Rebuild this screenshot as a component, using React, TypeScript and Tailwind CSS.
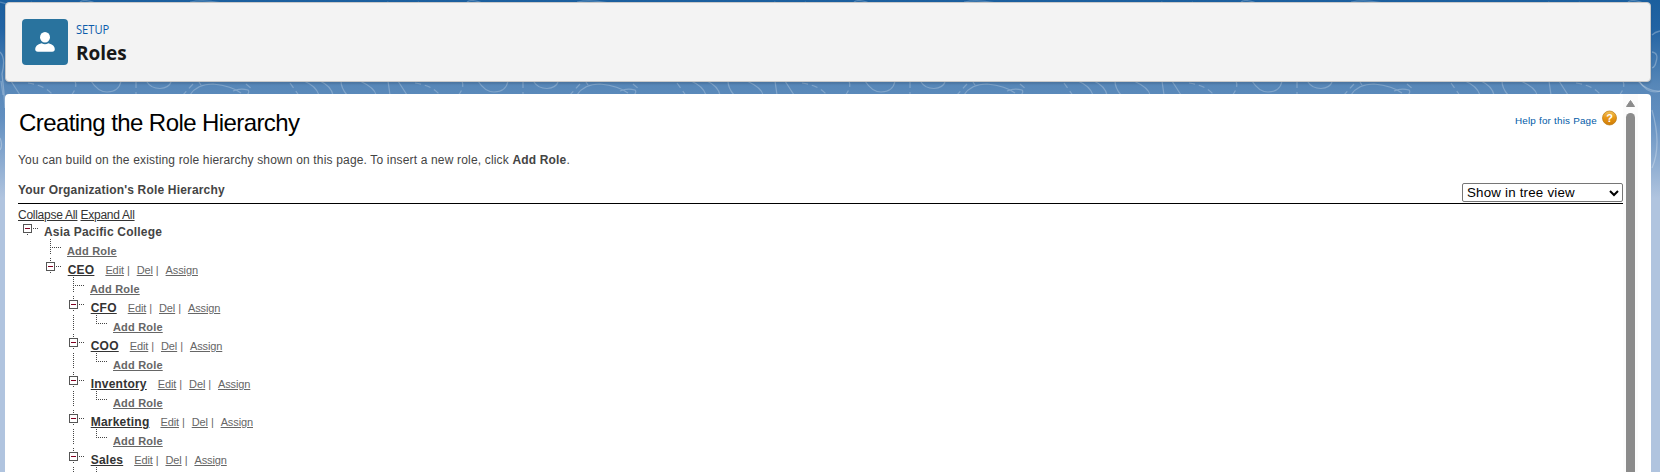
import React from "react";

type Row = { kind: "root" | "role" | "add"; level: number; label: string; last?: boolean };

const rows: Row[] = [
  { kind: "root", level: 0, label: "Asia Pacific College" },
  { kind: "add", level: 1, label: "Add Role" },
  { kind: "role", level: 1, label: "CEO" },
  { kind: "add", level: 2, label: "Add Role" },
  ...["CFO", "COO", "Inventory", "Marketing", "Sales"].flatMap((label): Row[] => [
    { kind: "role", level: 2, label },
    { kind: "add", level: 3, label: label === "Sales" ? "" : "Add Role", last: true },
  ]),
];

function Branch({ row }: { row: Row }) {
  const dots = { stroke: "#444", strokeDasharray: "1 1" };
  return (
    <svg width="22" height="19" className="shrink-0" shapeRendering="crispEdges" fill="none">
      {row.kind === "add" ? (
        <>
          <path d={row.last ? "M5.5 1V10" : "M5.5 1V17"} {...dots} />
          <path d="M5 9.5H17" {...dots} />
        </>
      ) : (
        <>
          {row.kind === "role" && <path d="M5.5 1V5" {...dots} />}
          <path d="M5.5 15V17" {...dots} />
          <path d="M11 9.5H16" {...dots} />
          <rect x="1.5" y="5.5" width="8" height="8" stroke="#555" fill="#fff" />
          <path d="M3 9.5H8" stroke="#800020" />
        </>
      )}
    </svg>
  );
}

function TreeRow({ row }: { row: Row }) {
  return (
    <div className="flex h-[19px] items-start whitespace-nowrap">
      {Array.from({ length: row.level }, (_, i) => (
        <svg key={i} width="23" height="19" className="shrink-0" shapeRendering="crispEdges">
          {i === 2 && <path d="M5.5 1V17" stroke="#444" strokeDasharray="1 1" />}
        </svg>
      ))}
      <Branch row={row} />
      {row.kind === "root" && (
        <span className="text-[12px] leading-[27px] font-bold tracking-[0.2px] text-[#444]">{row.label}</span>
      )}
      {row.kind === "add" && (
        <a className="text-[11px] leading-[27px] font-bold tracking-[0.18px] text-[#666] underline">{row.label}</a>
      )}
      {row.kind === "role" && (
        <div className="ml-[0.7px] flex text-[11px] leading-[27px] tracking-[-0.11px] text-[#666]">
          <a className="mr-[11px] text-[12px] font-bold tracking-[0.23px] text-[#333] underline">{row.label}</a>
          <a className="underline">Edit</a>
          <span className="mr-[7px] ml-[3px]">|</span>
          <a className="underline">Del</a>
          <span className="mr-[7px] ml-[3px]">|</span>
          <a className="underline">Assign</a>
        </div>
      )}
    </div>
  );
}

function Backdrop() {
  return (
    <svg className="absolute inset-0" width="1660" height="472">
      <defs>
        <linearGradient id="sky" x1="0" y1="0" x2="0" y2="1">
          <stop offset="0" stopColor="#1b5f9e" />
          <stop offset="0.06" stopColor="#2263a3" />
          <stop offset="0.18" stopColor="#5787b8" />
          <stop offset="0.25" stopColor="#628fc0" />
          <stop offset="0.42" stopColor="#b0c4df" />
          <stop offset="1" stopColor="#b0c4df" />
        </linearGradient>
        <pattern id="topo" width="387" height="472" patternUnits="userSpaceOnUse">
          <g fill="none" stroke="#fff" strokeOpacity="0.24" strokeWidth="1.2">
            <path d="M91 81Q98 92 107 92Q119 92 121 81M147 82Q151 88.500 160 88.500Q169 88 171 82" />
            <path d="M190 95Q197 84 213 84Q232 86 241 93M199 82L201 85M233 91Q240 88 248 90Q250 92 247 95" />
            <path d="M304 81Q316 86 319 95M320 81Q331 86 333 95M341 81Q341 88 347 95M360 81Q375 88 376 95" />
            <path d="M1 81L3 95M11 81L20 95M0 2Q20 8 32 2M80 2Q85 -2 100 5M190 2Q210 -2 240 8" />
            <path strokeDasharray="6 4" d="M28 83Q48 86 54 97M75 81Q78 88 70 97M136 82V96M290 83L300 97M193 84L182 96M246 84L253 90" />
          </g>
        </pattern>
      </defs>
      <rect width="1660" height="472" fill="url(#sky)" />
      <rect width="1660" height="102" fill="url(#topo)" />
      <g fill="none" stroke="#fff" strokeOpacity="0.28" strokeWidth="1.3">
        <path d="M0 52Q6 58 2 74Q4 90 5 108M0 138Q3 145 0 150M1652 52Q1659 53 1656 62Q1655 67 1652 68M1652 110Q1662 145 1652 168M1652 35Q1655 32 1660 31M1638 81Q1648 92 1660 91" />
      </g>
    </svg>
  );
}

export default function App() {
  return (
    <div className="relative h-[472px] w-[1660px] overflow-hidden font-['Liberation_Sans',Arial,sans-serif]">
      <Backdrop />
      <div className="relative flex h-full flex-col gap-3 pt-[2px] pr-[9px] pl-[5px]">
        <header className="flex h-20 shrink-0 items-start rounded-[4px] border border-[#c9c9c9] bg-[#f3f3f3] pt-4 pl-4 shadow-[0_2px_2px_rgba(0,0,0,0.12)]">
          <div className="flex size-[46px] items-center justify-center rounded-[4px] bg-[#29739e]">
            <svg width="20" height="20" viewBox="0 0 20 20" fill="#fff">
              <ellipse cx="10" cy="5.3" rx="5" ry="5.3" />
              <path d="M6.6 11.2Q10 13.4 13.4 11.2Q19.8 13 19.8 17Q19.8 19.7 17.2 19.7H2.8Q0.2 19.7 0.2 17Q0.2 13 6.6 11.2Z" />
            </svg>
          </div>
          <div className="ml-2 font-['Open_Sans','Noto_Sans',sans-serif]">
            <p className="mt-[2px] origin-left scale-x-[0.93] text-[12px] leading-[17px] text-[#0b5cab]">SETUP</p>
            <h1 className="mt-[3px] text-[19px] leading-[24px] font-bold text-[#181818]">Roles</h1>
          </div>
        </header>
        <main className="flex min-h-0 flex-1 overflow-hidden rounded-t-[4px] bg-white">
          <div className="w-[1618px] pl-[13px]">
            <div className="flex h-[59px] items-start justify-between">
              <h2 className="mt-[14px] ml-px text-[24px] leading-[30px] tracking-[-0.58px] text-black">
                Creating the Role Hierarchy
              </h2>
              <div className="mt-4 mr-[6px] flex text-[#015ba7]">
                <a className="mt-[4px] mr-[5px] text-[9.9px] leading-[14px] tracking-[0.2px]">Help for this Page</a>
                <svg width="15" height="16" viewBox="0 0 15 16">
                  <defs>
                    <linearGradient id="orb" x1="0" y1="0" x2="0" y2="1">
                      <stop offset="0" stopColor="#f3c35b" />
                      <stop offset="0.5" stopColor="#e79513" />
                      <stop offset="1" stopColor="#cf7c08" />
                    </linearGradient>
                  </defs>
                  <circle cx="7.5" cy="8" r="7" fill="url(#orb)" stroke="#b9790f" strokeWidth="0.7" />
                  <text x="7.5" y="12" textAnchor="middle" fontSize="11" fontWeight="bold" fill="#fff">?</text>
                </svg>
              </div>
            </div>
            <p className="text-[12px] leading-[15px] tracking-[0.166px] text-[#444]">
              You can build on the existing role hierarchy shown on this page. To insert a new role, click <b>Add Role</b>.
            </p>
            <div className="mt-[14px] flex h-[22px] items-start justify-between border-b border-black">
              <h3 className="text-[12px] leading-[17px] font-bold tracking-[0.18px] text-[#444]">Your Organization's Role Hierarchy</h3>
              <div className="mt-px flex h-[19px] w-[161px] items-center justify-between rounded-[2px] border border-[#767676] pl-1 text-[13.33px] leading-4 tracking-[0.2px] text-black">
                Show in tree view
                <svg width="12" height="8" viewBox="0 0 12 8" className="mr-[2px]">
                  <path d="M2 2L6 6L10 2" fill="none" stroke="#000" strokeWidth="2" />
                </svg>
              </div>
            </div>
            <div className="h-[15px] text-[12px] leading-[22px] tracking-[-0.27px] text-[#333]">
              <a className="underline">Collapse All</a> <a className="underline">Expand All</a>
            </div>
            <div className="pl-1">
              {rows.map((row, i) => (
                <TreeRow key={i} row={row} />
              ))}
            </div>
          </div>
          <div className="flex w-[15px] flex-col items-center bg-[#fcfcfc] pt-[6px]">
            <svg width="9" height="7" viewBox="0 0 9 7">
              <path d="M4.5 .5L8.5 6.5H.5Z" fill="#8b8b8b" stroke="#8b8b8b" strokeLinejoin="round" />
            </svg>
            <div className="mt-[6px] w-[9px] flex-1 rounded-t-[5px] bg-[#8b8b8b]" />
          </div>
        </main>
      </div>
    </div>
  );
}
